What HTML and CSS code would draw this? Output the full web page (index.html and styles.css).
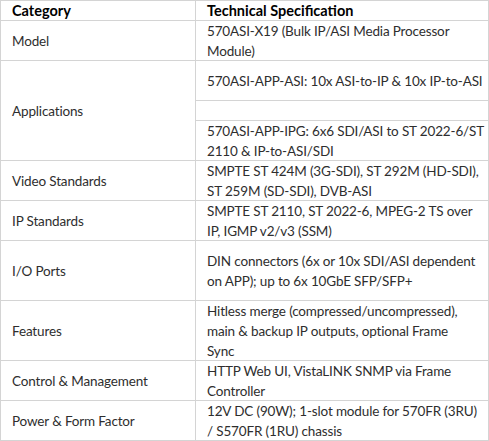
FILE: index.html
```html
<!DOCTYPE html>
<html>
<head>
<meta charset="utf-8">
<link rel="stylesheet" href="styles.css">
</head>
<body>
<div class="spec">
  <div class="cell head">Category</div>
  <div class="cell head">Technical Specification</div>

  <div class="cell">Model</div>
  <div class="cell">570ASI-X19 (Bulk IP/ASI Media Processor<br>Module)</div>

  <div class="cell apps">Applications</div>
  <div class="cell">570ASI-APP-ASI: 10x ASI-to-IP &amp; 10x IP-to-ASI</div>
  <div class="cell"></div>
  <div class="cell">570ASI-APP-IPG: 6x6 SDI/ASI to ST 2022-6/ST<br>2110 &amp; IP-to-ASI/SDI</div>

  <div class="cell">Video Standards</div>
  <div class="cell">SMPTE ST 424M (3G-SDI), ST 292M (HD-SDI),<br>ST 259M (SD-SDI), DVB-ASI</div>

  <div class="cell">IP Standards</div>
  <div class="cell">SMPTE ST 2110, ST 2022-6, MPEG-2 TS over<br>IP, IGMP v2/v3 (SSM)</div>

  <div class="cell">I/O Ports</div>
  <div class="cell">DIN connectors (6x or 10x SDI/ASI dependent<br>on APP); up to 6x 10GbE SFP/SFP+</div>

  <div class="cell">Features</div>
  <div class="cell">Hitless merge (compressed/uncompressed),<br>main &amp; backup IP outputs, optional Frame<br>Sync</div>

  <div class="cell">Control &amp; Management</div>
  <div class="cell">HTTP Web UI, VistaLINK SNMP via Frame<br>Controller</div>

  <div class="cell">Power &amp; Form Factor</div>
  <div class="cell">12V DC (90W); 1-slot module for 570FR (3RU)<br>/ S570FR (1RU) chassis</div>
</div>
</body>
</html>
```
FILE: styles.css
```css
html, body {
  margin: 0;
  padding: 0;
  background: #ffffff;
}
.spec {
  display: grid;
  grid-template-columns: 194px 292px;
  grid-template-rows: 19px 39px 39px 19px 39px 39px 39px 59px 59px 39px 39px;
  gap: 1px;
  width: 489px;
  height: 441px;
  box-sizing: border-box;
  border: 1px solid #d4d4d4;
  background: #d4d4d4;
  font-family: Lato, "Open Sans", sans-serif;
  font-size: 13.5px;
  letter-spacing: -0.15px;
  line-height: 20px;
  color: #2e2e2e;
}
.cell {
  background: #ffffff;
  display: flex;
  align-items: center;
  padding: 0 0 0 11px;
  white-space: nowrap;
}
.head {
  font-size: 14.5px;
  letter-spacing: 0;
  font-weight: 700;
  color: #000000;
}
.apps {
  grid-row: span 3;
}
```
